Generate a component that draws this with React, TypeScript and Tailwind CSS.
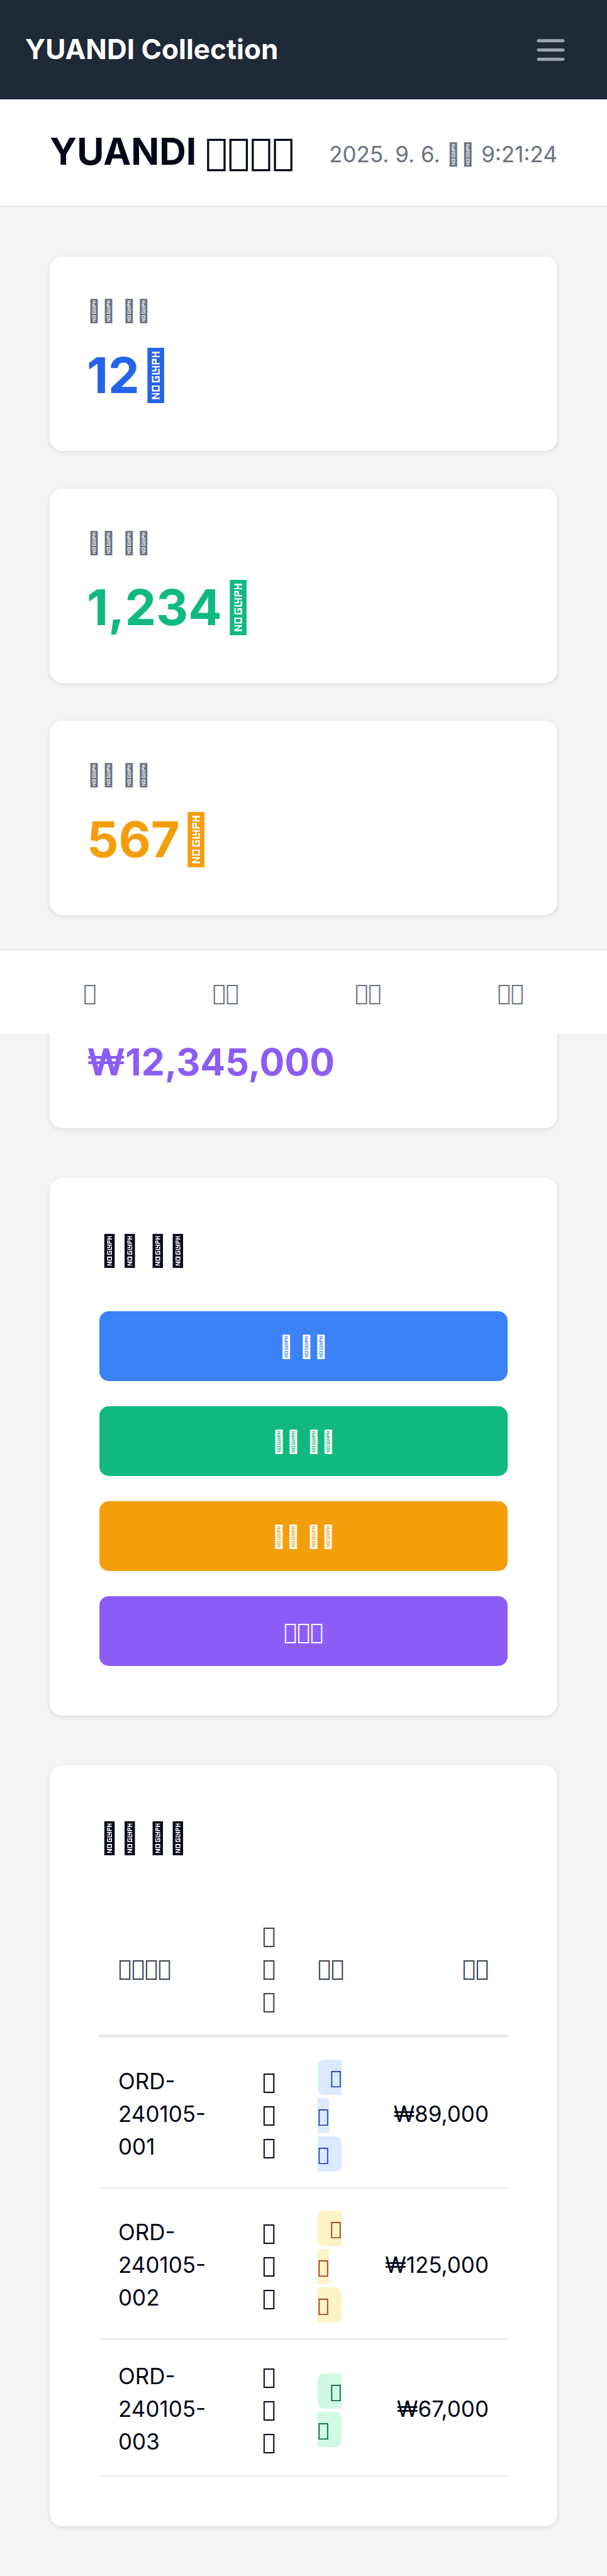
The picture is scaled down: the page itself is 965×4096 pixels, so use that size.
import type { ReactNode } from 'react';

const G = '\u{10FFFD}';

function Box({ count }: { count: number }) {
  return <span className="font-['DejaVu_Sans'] leading-none font-normal">{G.repeat(count)}</span>;
}

const stats = [
  { value: `12${G}`, tone: 'text-[79px] leading-[119px] text-[#2563eb]', label: true },
  { value: `1,234${G}`, tone: 'text-[79px] leading-[119px] text-[#10b981]', label: true },
  { value: `567${G}`, tone: 'text-[79px] leading-[119px] text-[#f59e0b]', label: true },
  { value: '₩12,345,000', tone: 'text-[59px] leading-[89px] text-[#8b5cf6]', label: false },
];

const actions: { label: ReactNode; tone: string }[] = [
  { label: `${G} ${G}${G}`, tone: 'bg-[#3b82f6]' },
  { label: `${G}${G} ${G}${G}`, tone: 'bg-[#10b981]' },
  { label: `${G}${G} ${G}${G}`, tone: 'bg-[#f59e0b]' },
  { label: <Box count={3} />, tone: 'bg-[#8b5cf6]' },
];

const orders = [
  { id: 'ORD-240105-001', status: 3, tone: 'bg-[#dbeafe] text-[#1e40af]', amount: '₩89,000', row: 'h-[240px]' },
  { id: 'ORD-240105-002', status: 3, tone: 'bg-[#fef3c7] text-[#92400e]', amount: '₩125,000', row: 'h-[240px]' },
  { id: 'ORD-240105-003', status: 2, tone: 'bg-[#d1fae5] text-[#065f46]', amount: '₩67,000', row: 'h-[218px]' },
];

function Stack({ count }: { count: number }) {
  return (
    <>
      {Array.from({ length: count }, (_, i) => (
        <span key={i}>
          {i > 0 && <br />}
          <Box count={1} />
        </span>
      ))}
    </>
  );
}

function Card({ children, className }: { children: ReactNode; className: string }) {
  return (
    <section className={`rounded-[20px] bg-white shadow-[0_2px_7px_rgba(0,0,0,0.1)] ${className}`}>{children}</section>
  );
}

export default function App() {
  return (
    <div className="relative min-h-screen bg-gray-100 font-['Inter',sans-serif] text-[#020817]">
      <header className="flex h-[158px] items-center justify-between bg-[#1f2937] px-10">
        <span className="pb-0.5 text-[44px] leading-[68px] font-bold text-white">YUANDI Collection</span>
        <button type="button" aria-label="Menu" className="p-5 text-[#9ca3af]">
          <svg viewBox="0 0 24 24" className="size-[59px]" fill="none" stroke="currentColor" strokeWidth="2" strokeLinecap="round">
            <path d="M4 6h16M4 12h16M4 18h16" />
          </svg>
        </button>
      </header>

      <div className="flex h-[171px] items-center justify-between border-b-2 border-[#e5e7eb] bg-white px-[79px]">
        <h1 className="pb-1 text-[59px] leading-[89px] font-bold">
          YUANDI <Box count={4} />
        </h1>
        <time className="pt-1 text-[35px] leading-[52px] text-[#6b7280]">
          2025. 9. 6. {G}{G} 9:21:24
        </time>
      </div>

      <main className="flex flex-col gap-[79px] p-[79px]">
        <div className="flex flex-col gap-[60px]">
          {stats.map((stat) => (
            <Card key={stat.value} className="px-[59px] pt-[60px] pb-[61px]">
              <p className="mb-[17px] h-[52px] text-[35px] leading-[52px] text-[#6b7280]">
                {stat.label && `${G}${G} ${G}${G}`}
              </p>
              <p className={`font-bold ${stat.tone}`}>{stat.value}</p>
            </Card>
          ))}
        </div>

        <Card className="p-[79px]">
          <h2 className="mb-[59px] text-[49px] leading-[74px] font-semibold">{`${G}${G} ${G}${G}`}</h2>
          <div className="flex flex-col gap-10">
            {actions.map((action, i) => (
              <button
                key={i}
                type="button"
                className={`h-[111px] rounded-[15px] text-[35px] leading-[52px] font-medium text-white ${action.tone}`}
              >
                {action.label}
              </button>
            ))}
          </div>
        </Card>

        <Card className="p-[79px]">
          <h2 className="mb-[59px] text-[49px] leading-[74px] font-semibold">{`${G}${G} ${G}${G}`}</h2>
          <table className="w-full table-fixed border-separate border-spacing-0 text-[35px] leading-[52px]">
            <thead>
              <tr className="text-left text-[#374151] [&>th]:border-b-5 [&>th]:border-[#e5e7eb] [&>th]:px-[30px] [&>th]:pt-8 [&>th]:pb-7">
                <th className="w-[229px]"><Box count={4} /></th>
                <th className="w-[88px]"><Stack count={3} /></th>
                <th className="w-[102px]"><Box count={2} /></th>
                <th className="text-right"><Box count={2} /></th>
              </tr>
            </thead>
            <tbody>
              {orders.map((order) => (
                <tr key={order.id} className={`${order.row} [&>td]:border-b-2 [&>td]:border-[#e5e7eb] [&>td]:px-[30px] [&>td]:pt-1`}>
                  <td>{order.id}</td>
                  <td><Stack count={3} /></td>
                  <td className="leading-[59px]">
                    <div className="pt-1">
                      <span className={`rounded-[10px] px-5 py-[10px] text-[30px] ${order.tone}`}>
                        <Stack count={order.status} />
                      </span>
                    </div>
                  </td>
                  <td className="text-right">{order.amount}</td>
                </tr>
              ))}
            </tbody>
          </table>
        </Card>
      </main>

      <nav className="absolute inset-x-0 top-[1509px] flex justify-around border-t-2 border-[#e5e7eb] bg-white px-10 pt-[41px] pb-[39px] text-[35px] leading-[52px] text-[#6b7280]">
        <a href="#home"><Box count={1} /></a>
        <a href="#orders"><Box count={2} /></a>
        <a href="#stock"><Box count={2} /></a>
        <a href="#more"><Box count={2} /></a>
      </nav>
    </div>
  );
}
